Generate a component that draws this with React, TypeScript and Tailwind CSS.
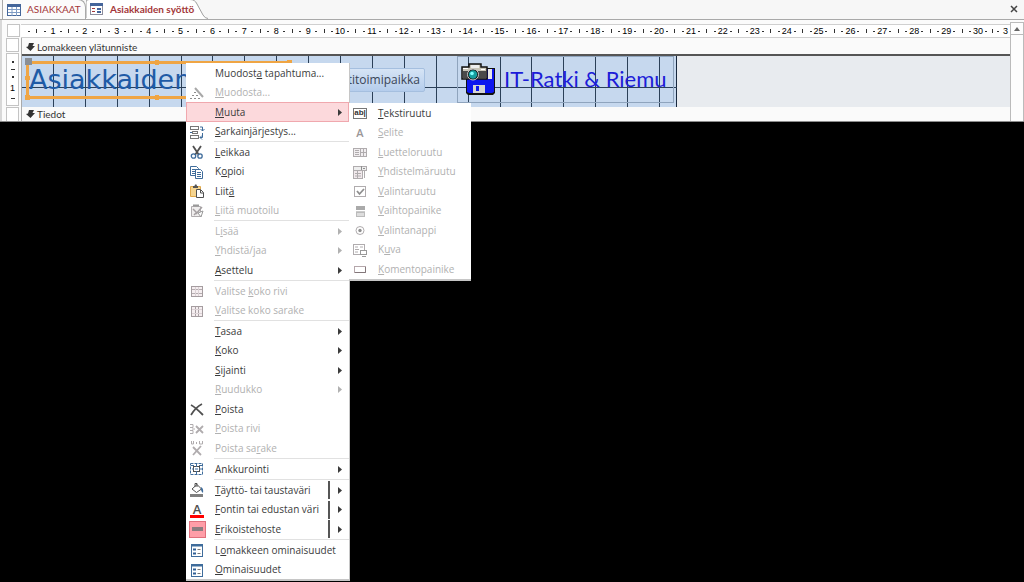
import { ReactNode } from "react";

interface MenuEntry {
  // "&" stands before the mnemonic letter
  label: string;
  icon?: ReactNode;
  disabled?: boolean;
  arrow?: boolean;
  split?: boolean;
  active?: boolean;
}

const GREY = "#b0acae";
const DARK = "#505050";
const BLUE = "#3f6c9b";

function Icon({ children }: { children: ReactNode }) {
  return (
    <svg width="16" height="16" viewBox="0 0 16 16" fill="none" aria-hidden="true">
      {children}
    </svg>
  );
}

const rowIcon = (
  <Icon>
    <rect x="2.5" y="3.5" width="11" height="10" fill="#f5eef0" stroke="#a59da0" />
    <path d="M3 6.5h10M3 10.5h10" stroke="#b5adb0" />
    <path d="M6.5 4v9M9.5 4v9" stroke="#dcd2d6" />
  </Icon>
);

const columnIcon = (
  <Icon>
    <rect x="2.5" y="3.5" width="11" height="10" fill="#f5eef0" stroke="#a59da0" />
    <path d="M6.5 4v9M9.5 4v9" stroke="#aaa2a5" />
    <path d="M3 6.5h10M3 10.5h10" stroke="#dcd2d6" />
  </Icon>
);

const wandIcon = (
  <Icon>
    <path d="M6 3l8 9" stroke="#a8a8a8" strokeWidth="2" />
    <path d="M5 7.5h2M3 10.5h2M7 10.5h2M1 13.5h2M5 13.5h2M9 13.5h2" stroke="#8c8c8c" />
  </Icon>
);

const tabOrderIcon = (
  <Icon>
    <rect x="1.5" y="2.5" width="8" height="3" stroke="#777" />
    <rect x="3.5" y="7.5" width="5" height="2" stroke="#777" />
    <rect x="1.5" y="11.5" width="8" height="3" stroke="#777" />
    <path d="M1 8.5h2M11 3h2.5v4M11.5 5l2 2 2-2M11 13.5h2.5V9M13 11.5l-2 2 2 2" stroke={BLUE} />
  </Icon>
);

const cutIcon = (
  <Icon>
    <path d="M4 2l6 9M12 2L6 11" stroke={DARK} strokeWidth="1.8" />
    <circle cx="4.5" cy="12" r="2.2" stroke={BLUE} strokeWidth="1.3" />
    <circle cx="11" cy="12" r="2.2" stroke={BLUE} strokeWidth="1.3" />
  </Icon>
);

const copyIcon = (
  <Icon>
    <path d="M1.5 2.5h6l2 2v7h-8z" fill="#fff" stroke={BLUE} />
    <path d="M3 5.5h4M3 7.5h3M3 9.5h3" stroke={BLUE} />
    <path d="M6.5 5.5h5l2 2v7h-7z" fill="#fff" stroke={BLUE} />
    <path d="M8 8.5h4M8 10.5h4M8 12.5h4" stroke={BLUE} />
  </Icon>
);

const pasteIcon = (
  <Icon>
    <path d="M1.5 3.5h10v10h-10z" fill="#f6d590" stroke="#e0a94b" />
    <path d="M4 5V3h1.5L6 1.5h1.5L8 3h1v2z" fill="#555" />
    <path d="M7.5 6.5h4l3 3v5h-7z" fill="#fff" stroke={DARK} />
    <path d="M11.5 7v3h3" stroke={DARK} />
  </Icon>
);

const pasteFormatIcon = (
  <Icon>
    <path d="M2.5 3.5h9v10h-9z" fill="#f0eeee" stroke={GREY} />
    <path d="M4 2.5h6" stroke="#999" strokeWidth="2" />
    <path d="M13 4L7 11M4 6l4 4M5 12l2-2" stroke="#a5a0a2" strokeWidth="1.5" />
    <path d="M9 10l3 4 2-6z" stroke="#999" fill="#fff" />
  </Icon>
);

const deleteIcon = (
  <Icon>
    <path d="M2 4c4 2 8 6 12 10M13 3C9 5 5 9 2 14" stroke={DARK} strokeWidth="1.8" />
  </Icon>
);

const deleteRowIcon = (
  <Icon>
    <path d="M7 5l7 7M14 5l-7 7" stroke={GREY} strokeWidth="1.8" />
    <path d="M1 3.5h3v3H1M1 9.5h3v3H1M3 8h3" stroke={GREY} />
  </Icon>
);

const deleteColumnIcon = (
  <Icon>
    <path d="M4 7l8 8M12 6l-8 9" stroke={GREY} strokeWidth="1.8" />
    <path d="M2.5 1v3h2V1M7.5 2v2M10.5 1v3h3V1" stroke={GREY} />
  </Icon>
);

const anchorIcon = (
  <Icon>
    <rect x="1.5" y="2.5" width="12" height="11" stroke={BLUE} strokeDasharray="3 1" />
    <rect x="4.5" y="5.5" width="6" height="5" fill="#fff" stroke={DARK} />
    <path d="M2 4.5h3M10 4.5h3M3 8h2M10 8h3M7.5 3v3M7.5 10v3M6 8h3" stroke={BLUE} />
  </Icon>
);

const fillIcon = (
  <Icon>
    <path d="M3 7l5-4.5L12.5 7 7.5 10.5z" fill="#fff" stroke={DARK} />
    <path d="M6 5V1.5h2V5" stroke={DARK} />
    <path d="M12 5c2 1 2.5 3 2 6-1.5-1-2.5-3-2-6z" fill={BLUE} />
    <rect x="1" y="12" width="13" height="3" fill="#7f7f7f" />
  </Icon>
);

const fontColorIcon = (
  <span className="flex h-4 w-[14px] flex-col items-center border-b-3 border-[#ff0000] text-[13px] leading-[14px] font-semibold text-[#505050]">
    A
  </span>
);

const effectIcon = (
  <span className="flex h-[17px] w-[17px] shrink-0 items-center justify-center border border-[#e0707c] bg-[#ff9ea8]">
    <span className="h-1 w-[11px] bg-[#8b7d80]" />
  </span>
);

const propertiesIcon = (
  <Icon>
    <rect x="2.5" y="2.5" width="11" height="12" fill="#fff" stroke={BLUE} />
    <path d="M2 3.5h12" stroke={BLUE} strokeWidth="2" />
    <path d="M4 7.5h3M4 11.5h3" stroke="#2f5f95" strokeWidth="2" />
    <path d="M8.5 7.5h3M8.5 11.5h3" stroke="#777" />
  </Icon>
);

const textBoxIcon = (
  <span className="flex h-[11px] w-[14px] shrink-0 items-center justify-center border border-[#777] font-['Liberation_Sans'] text-[8px] leading-none font-bold text-[#333]">
    ab|
  </span>
);

const labelIcon = <span className="text-[11px] leading-4 font-semibold text-[#9a9698]">A</span>;

const listBoxIcon = (
  <Icon>
    <rect x="1.5" y="4.5" width="13" height="8" fill="#f1eef0" stroke={GREY} />
    <path d="M3 6.5h4M3 8.5h4M3 10.5h4M8.5 5v7M11.5 5v7M9 8.5h5" stroke={GREY} />
  </Icon>
);

const comboIcon = (
  <Icon>
    <rect x="1.5" y="2.5" width="13" height="4" fill="#eee" stroke={GREY} />
    <path d="M9.5 2v5M11 4.5h2" stroke="#8f8f8f" />
    <rect x="1.5" y="6.5" width="9" height="8" fill="#f1e9ec" stroke={GREY} />
    <path d="M3 9.5h6M3 12h6M5.5 7v7M12.5 7v7" stroke={GREY} />
  </Icon>
);

const checkIcon = (
  <Icon>
    <rect x="2.5" y="3.5" width="11" height="10" stroke={GREY} />
    <path d="M5 8l2.5 3L12 6" stroke="#8f8f8f" strokeWidth="1.8" />
  </Icon>
);

const toggleIcon = (
  <Icon>
    <rect x="4" y="3" width="9" height="4" fill="#aaa" />
    <rect x="4.5" y="9.5" width="8" height="4" fill="#ddd" stroke="#bbb" />
    <path d="M4 8.5h9" stroke="#ccc" />
  </Icon>
);

const radioIcon = (
  <Icon>
    <circle cx="8" cy="8.5" r="4" stroke={GREY} />
    <circle cx="8" cy="8.5" r="1.7" fill="#8f8f8f" />
  </Icon>
);

const imageIcon = (
  <Icon>
    <rect x="1.5" y="2.5" width="11" height="10" stroke={GREY} />
    <path d="M3 5h3M3 7.5h4M3 10h3M8 5h3" stroke={GREY} />
    <rect x="8.5" y="8.5" width="6" height="4" fill="#fff" stroke="#999" />
    <path d="M10 14.5h4" stroke="#999" />
  </Icon>
);

const commandIcon = (
  <Icon>
    <rect x="2.5" y="5.5" width="11" height="6" stroke="#b5a7ab" />
    <path d="M3 11.5h10.5V6" stroke="#83777a" />
  </Icon>
);

const menuGroups: MenuEntry[][] = [
  [
    { label: "Muodost&a tapahtuma..." },
    { label: "&Muodosta...", icon: wandIcon, disabled: true },
    { label: "&Muuta", arrow: true, active: true },
    { label: "&Sarkainjärjestys...", icon: tabOrderIcon },
  ],
  [
    { label: "&Leikkaa", icon: cutIcon },
    { label: "K&opioi", icon: copyIcon },
    { label: "Liit&ä", icon: pasteIcon },
    { label: "&Liitä muotoilu", icon: pasteFormatIcon, disabled: true },
  ],
  [
    { label: "L&isää", disabled: true, arrow: true },
    { label: "&Yhdistä/jaa", disabled: true, arrow: true },
    { label: "&Asettelu", arrow: true },
  ],
  [
    { label: "Valitse &koko rivi", icon: rowIcon, disabled: true },
    { label: "&Valitse koko sarake", icon: columnIcon, disabled: true },
  ],
  [
    { label: "&Tasaa", arrow: true },
    { label: "&Koko", arrow: true },
    { label: "&Sijainti", arrow: true },
    { label: "&Ruudukko", disabled: true, arrow: true },
    { label: "&Poista", icon: deleteIcon },
    { label: "&Poista rivi", icon: deleteRowIcon, disabled: true },
    { label: "Poista sa&rake", icon: deleteColumnIcon, disabled: true },
  ],
  [{ label: "Ankkurointi", icon: anchorIcon, arrow: true }],
  [
    { label: "&Täyttö- tai taustaväri", icon: fillIcon, arrow: true, split: true },
    { label: "&Fontin tai edustan väri", icon: fontColorIcon, arrow: true, split: true },
    { label: "&Erikoistehoste", icon: effectIcon, arrow: true, split: true },
  ],
  [
    { label: "L&omakkeen ominaisuudet", icon: propertiesIcon },
    { label: "&Ominaisuudet", icon: propertiesIcon },
  ],
];

const submenu: MenuEntry[] = [
  { label: "&Tekstiruutu", icon: textBoxIcon },
  { label: "&Selite", icon: labelIcon, disabled: true },
  { label: "&Luetteloruutu", icon: listBoxIcon, disabled: true },
  { label: "&Yhdistelmäruutu", icon: comboIcon, disabled: true },
  { label: "&Valintaruutu", icon: checkIcon, disabled: true },
  { label: "&Vaihtopainike", icon: toggleIcon, disabled: true },
  { label: "&Valintanappi", icon: radioIcon, disabled: true },
  { label: "K&uva", icon: imageIcon, disabled: true },
  { label: "&Komentopainike", icon: commandIcon, disabled: true },
];

function Mnemonic({ label }: { label: string }) {
  const at = label.indexOf("&");
  if (at < 0) return <>{label}</>;
  return (
    <>
      {label.slice(0, at)}
      <u className="underline-offset-1">{label[at + 1]}</u>
      {label.slice(at + 2)}
    </>
  );
}

function MenuItem({ entry }: { entry: MenuEntry }) {
  return (
    <button
      type="button"
      role="menuitem"
      disabled={entry.disabled}
      className={`flex w-full items-center border pr-1 text-left odd:h-5 even:h-[19px] ${
        entry.active ? "border-[#f0a8ae] bg-[#fcd9dc]" : "border-transparent"
      } ${entry.disabled ? "text-[#b1b1b1]" : "text-[#3b3b3b]"}`}
    >
      <span className="flex w-5 shrink-0 items-center justify-center">{entry.icon}</span>
      <span className="grow pl-2 whitespace-nowrap">
        <Mnemonic label={entry.label} />
      </span>
      {entry.split && <span className="mr-2 h-[18px] w-0.5 shrink-0 bg-[#555]" />}
      {entry.arrow && (
        <svg width="4" height="7" viewBox="0 0 4 7" className="mr-0.5 shrink-0" fill="currentColor" aria-hidden="true">
          <path d="M0 0l4 3.5-4 3.5z" />
        </svg>
      )}
    </button>
  );
}

function ContextMenu() {
  return (
    <div
      role="menu"
      className="absolute top-[63px] left-[186px] z-10 w-[164px] border-r border-b-2 border-[#c6c6c6] bg-white"
    >
      {menuGroups.map((group, idx) => (
        <div key={idx}>
          {idx > 0 && <div className="ml-7 h-px bg-[#e1e1e1]" />}
          <div>
            {group.map((entry) => (
              <MenuItem entry={entry} key={entry.label} />
            ))}
          </div>
        </div>
      ))}
      <div
        role="menu"
        className="absolute top-10 left-full w-[122px] border-b-2 border-[#c6c6c6] bg-white"
      >
        {submenu.map((entry) => (
          <MenuItem entry={entry} key={entry.label} />
        ))}
      </div>
    </div>
  );
}

function TabBar() {
  return (
    <div className="flex h-5 items-end border-b border-[#a9a9a9] bg-[#f7f7f7] font-[Lato,sans-serif] text-[10px] text-[#a4373a]">
      <div className="ml-0.5 flex h-5 w-[84px] items-center gap-1.5 rounded-tr-lg border-t border-r border-l border-[#a9a9a9] bg-[#fbfbfb] pl-1 whitespace-nowrap">
        <svg width="14" height="12" viewBox="0 0 14 12" className="shrink-0" aria-hidden="true">
          <rect x=".5" y=".5" width="13" height="11" fill="#fff" stroke="#44669a" />
          <path d="M0 1.5h14" stroke="#44669a" strokeWidth="3" />
          <path d="M1 5.5h12M1 8.5h12M5 3v9M9.5 3v9" stroke="#7f9cc4" />
        </svg>
        <a href="#asiakkaat">ASIAKKAAT</a>
      </div>
      <div className="relative flex h-5 w-[120px] items-center gap-1.5 pl-1 font-bold">
        <svg width="122" height="20" viewBox="0 0 122 20" className="absolute top-0 left-0" aria-hidden="true">
          <path d="M0 20V3Q0 .5 3 .5H104Q109 .5 111 5L117 16Q119 19.5 122 19.5V20z" fill="#fff" />
          <path d="M0 19V3Q0 .5 3 .5H104Q109 .5 111 5L117 16Q119 19.5 122 19.5" fill="none" stroke="#a0a0a0" />
        </svg>
        <svg width="14" height="13" viewBox="0 0 14 13" className="relative shrink-0" aria-hidden="true">
          <rect x=".5" y=".5" width="12" height="11" fill="#fff" stroke="#8c8c9c" />
          <path d="M0 1.5h13" stroke="#45659b" strokeWidth="3" />
          <path d="M2 5.5h3M2 8.5h3" stroke="#a4373a" />
          <rect x="7" y="5" width="4" height="2" fill="#45659b" />
          <rect x="7" y="8" width="4" height="2" fill="#45659b" />
        </svg>
        <a href="#syotto" className="relative whitespace-nowrap">
          Asiakkaiden syöttö
        </a>
      </div>
      <button type="button" aria-label="Sulje" className="mr-1.5 ml-auto flex h-5 w-2 items-center">
        <svg width="8" height="8" viewBox="0 0 8 8" aria-hidden="true">
          <path d="M1 1l6 6M7 1L1 7" stroke="#444" strokeWidth="1.5" />
        </svg>
      </button>
    </div>
  );
}

const Dot = () => <span className="h-px w-0.5 bg-[#333]" />;
const Tick = () => <span className="h-1 w-px bg-[#333]" />;

function Ruler() {
  return (
    <div className="flex h-4 pt-0.5">
      <div className="ml-[5px] h-[13px] w-[13px] shrink-0 border border-[#c4c4c4] bg-white" />
      <div className="ml-px flex min-w-0 grow overflow-hidden border-t border-b border-[#d0d0d0] bg-white pl-1 font-['Liberation_Sans'] text-[9px] leading-none text-black">
        <div className="flex w-2 shrink-0 items-center justify-center">
          <Dot />
        </div>
        <div className="grid w-[957px] shrink-0 grid-cols-30">
          {Array.from({ length: 30 }, (_, i) => (
            <div key={i} className="grid grid-cols-4 items-center justify-items-center">
              <Tick />
              <Dot />
              <span className="flex w-0 justify-center">{i + 1}</span>
              <Dot />
            </div>
          ))}
        </div>
        <div className="flex shrink-0 items-center gap-1 pl-0.5">
          <Tick />
          <Dot />
          <span>3</span>
        </div>
      </div>
    </div>
  );
}

function SectionBar({ title }: { title: string }) {
  return (
    <div className="flex h-[14px] items-center gap-0.5 bg-[#fafafa] pl-1 font-[Lato,sans-serif] text-[10px] leading-[14px] text-[#333]">
      <svg width="9" height="8" viewBox="0 0 9 8" aria-hidden="true">
        <path d="M3 0h5L6.5 3H9L4.5 8 0 4l2-.5z" fill="#333" />
      </svg>
      {title}
    </div>
  );
}

function FloppyCamera() {
  return (
    <svg width="36" height="32" viewBox="0 0 36 32" className="absolute top-[7px] left-[439px]" aria-hidden="true">
      <path d="M5 5h29v25l-2 2H7l-2-2z" fill="#111" />
      <path d="M6 6h27v23l-2 1H8l-2-1z" fill="#0c16ee" />
      <rect x="27" y="6" width="4" height="10" fill="#e8e8e8" />
      <rect x="12" y="22" width="12" height="8" fill="#d4d4d4" />
      <rect x="15" y="23" width="3" height="5" fill="#0c16ee" />
      <path d="M1 4h7V1h12v3h6v12H1z" fill="#c9c6b8" stroke="#111" strokeWidth="1.5" />
      <path d="M10 2h8v3h-8z" fill="#eee" />
      <path d="M2 8h23v7H2z" fill="#4a4a4a" />
      <path d="M2 5.5h5M20 6.5h4" stroke="#fff" />
      <circle cx="12" cy="11.500" r="5.500" fill="#111" stroke="#ccc" />
      <circle cx="12" cy="11.500" r="4.200" fill="#159f9f" />
      <circle cx="11" cy="10.500" r="1.800" fill="#7fffff" />
    </svg>
  );
}

function FormCanvas() {
  return (
    <div className="relative h-[53px] border-t-2 border-[#555] bg-[#e8ebef]">
      <div className="h-full w-[655px] border-r border-[#18283e] bg-[#c6d8ee] pl-[31px]">
        <div className="grid h-full w-[638px] grid-cols-20 overflow-hidden">
          {Array.from({ length: 20 }, (_, i) => (
            <div key={i} className="border-l border-[#2b4058]" />
          ))}
        </div>
      </div>
      <div className="absolute top-[31px] left-0 h-px w-[655px] bg-[#2b4058]" />

      <div className="absolute top-[5px] left-1 h-[38px] w-[265px] border-3 border-[#efa544]">
        <h1 className="-mt-px font-['DejaVu_Sans',sans-serif] text-[27px] leading-[34px] whitespace-nowrap text-[#1f5ba6]">
          Asiakkaiden
        </h1>
        <span className="absolute -top-1.5 -left-1 h-[7px] w-[7px] bg-[#8a8f96]" />
        <span className="absolute -top-1 left-[126px] h-[5px] w-1 bg-[#efa544]" />
        <span className="absolute -bottom-1 left-[126px] h-[5px] w-1 bg-[#efa544]" />
        <span className="absolute top-3 -left-1 h-1 w-[5px] bg-[#efa544]" />
        <span className="absolute -bottom-1 -left-1 h-[5px] w-[5px] bg-[#efa544]" />
        <span className="absolute -top-1 -right-1 h-[5px] w-[5px] bg-[#efa544]" />
      </div>

      <button
        type="button"
        className="absolute top-3 left-[304px] h-6 w-[99px] rounded-xs border border-[#a5bfdf] bg-linear-to-b from-[#d6e4f5] to-[#b5cdec] pr-1 text-right text-[12px] text-[#3a4657]"
      >
        titoimipaikka
      </button>

      <div className="absolute top-0 left-[435px] h-[47px] w-[217px] border border-[#8fa4bd]" />
      <FloppyCamera />
      <span className="absolute top-[11px] left-[482px] font-[Lato,sans-serif] text-[22px] leading-6 whitespace-nowrap text-[#1c1cd8]">
        IT-Ratki &amp; Riemu
      </span>
    </div>
  );
}

export default function App() {
  return (
    <div className="relative min-h-screen bg-black font-['Open_Sans',sans-serif] text-[10px]">
      <div className="overflow-hidden border-b border-[#8c8c8c] bg-white">
        <TabBar />
        <div className="flex border-l-2 border-[#d8d8d8] bg-[#fbfbfb] pt-0.5">
          <div className="min-w-0 grow">
            <Ruler />
            <div className="flex">
              <div className="flex w-[19px] shrink-0 flex-col gap-px pl-1">
                <div className="h-[14px] w-[13px] border border-[#c4c4c4] bg-white" />
                <div className="flex h-[53px] w-[13px] flex-col items-center justify-center gap-[6px] border border-[#c4c4c4] bg-white font-['Liberation_Sans'] text-[9px] leading-[8px] text-black">
                  <span className="h-0.5 w-0.5 bg-[#333]" />
                  <span className="h-px w-1 bg-[#333]" />
                  <span className="h-0.5 w-0.5 bg-[#333]" />
                  <span>1</span>
                  <span className="h-px w-1 bg-[#333]" />
                </div>
                <div className="h-[14px] w-[13px] border border-b-0 border-[#c4c4c4] bg-white" />
              </div>
              <div className="min-w-0 grow border-l border-[#aaa] pt-0.5">
                <SectionBar title="Lomakkeen ylätunniste" />
                <FormCanvas />
                <SectionBar title="Tiedot" />
              </div>
            </div>
          </div>
          <div className="flex w-[14px] shrink-0 flex-col border-r border-l border-[#bbb] bg-[#fdfdfd]">
            <button
              type="button"
              aria-label="Vieritä ylös"
              className="flex h-[13px] items-center justify-center border-t border-b border-[#bbb]"
            >
              <svg width="6" height="4" viewBox="0 0 6 4" aria-hidden="true">
                <path d="M0 4l3-4 3 4z" fill="#666" />
              </svg>
            </button>
          </div>
        </div>
      </div>
      <ContextMenu />
    </div>
  );
}
